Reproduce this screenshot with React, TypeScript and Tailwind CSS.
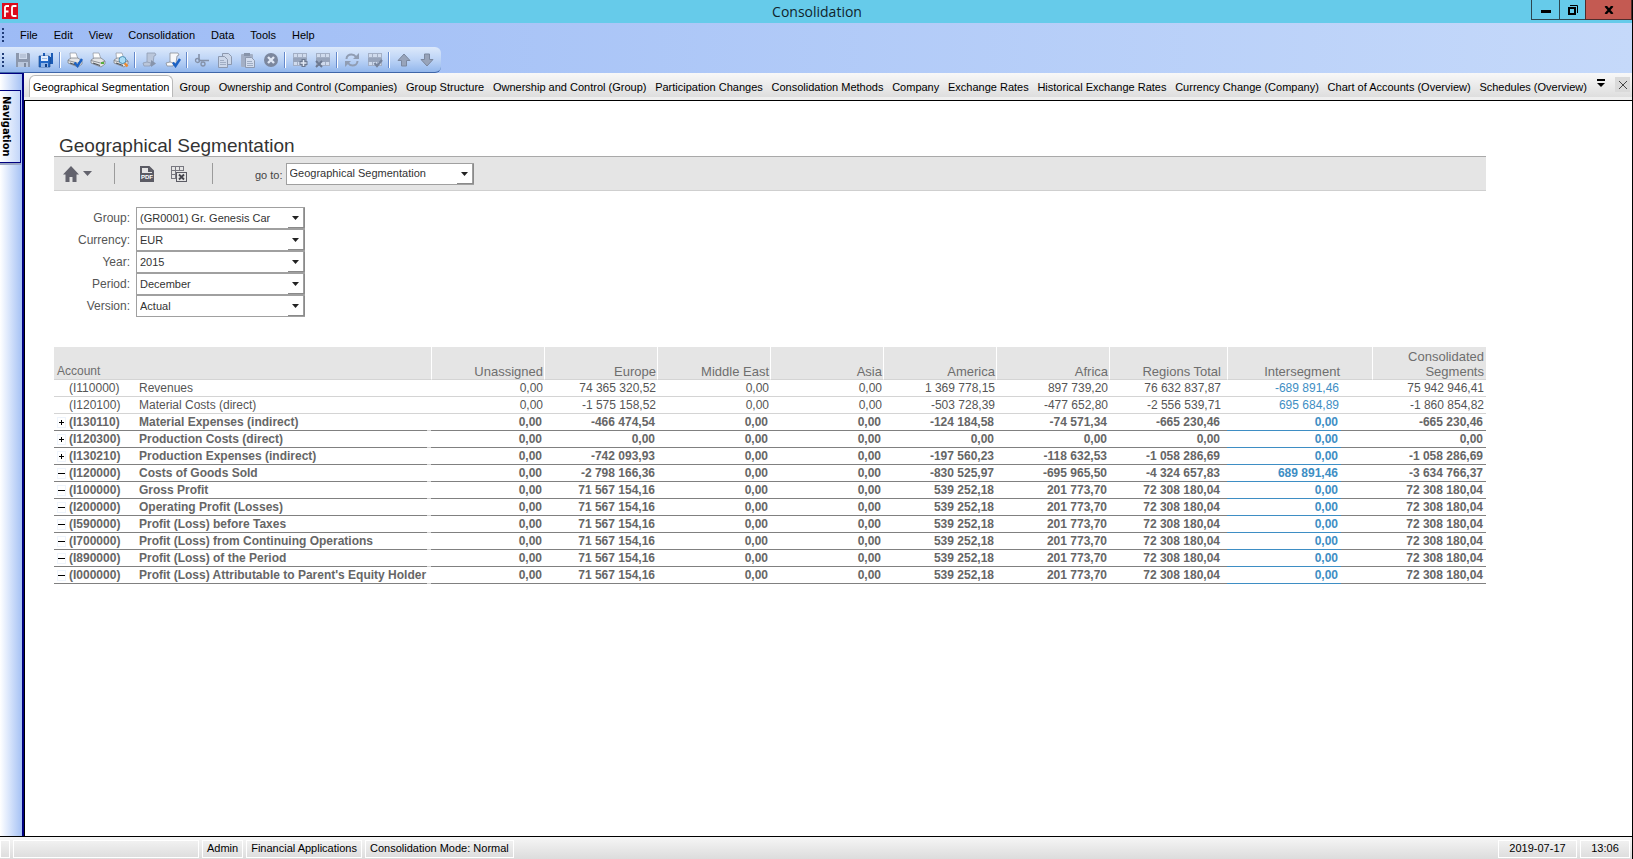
import type { ReactNode } from "react";

/* ---------- toolbar icons, 16 x 16 ---------- */

function Icon({ children }: { children: ReactNode }) {
  return (
    <svg viewBox="0 0 16 16" className="size-4" aria-hidden="true">
      {children}
    </svg>
  );
}

const SaveIcon = () => (
  <Icon>
    <path d="M1 1h13l1 1v13H1z" fill="#8c98ad" />
    <rect x="4" y="1" width="8" height="6" fill="#cfdaec" />
    <path d="M5 3h6M5 5h6" stroke="#a3b0c6" />
    <rect x="3" y="10" width="10" height="5" fill="#b9c6db" />
    <rect x="9" y="11" width="2" height="4" fill="#7d899e" />
  </Icon>
);

const SaveAllIcon = () => (
  <Icon>
    <path d="M5 1h10v11H5z" fill="#1b5bb5" />
    <rect x="7" y="1" width="6" height="4" fill="#bcd3f2" />
    <path d="M1 4h10l1 1v10H1z" fill="#2268c6" stroke="#123f85" strokeWidth="0.6" />
    <rect x="3" y="4" width="7" height="5" fill="#e3eefc" />
    <path d="M4 6.5h5" stroke="#9db9e0" />
    <rect x="3" y="11" width="7" height="4" fill="#8fb4e6" />
    <rect x="7" y="12" width="2" height="3" fill="#123f85" />
  </Icon>
);

function PrinterShape() {
  return (
    <>
      <path d="M3.500 7 3 1h6l2 6z" fill="#fdfdfd" stroke="#8e949d" strokeWidth="0.700" />
      <path d="M1 8l3-2h7l4 3v3l-4 3-10-4z" fill="#e4e5e6" stroke="#7e838b" strokeWidth="0.800" />
      <path d="M1 8.500l9.500 2.500L15 9" stroke="#777c84" strokeWidth="0.800" fill="none" />
      <path d="M3 11l7 2.500" stroke="#4e5359" strokeWidth="1.200" />
    </>
  );
}

const PrintCheckIcon = () => (
  <Icon>
    <PrinterShape />
    <path d="M7.500 10.500l3 3.500 4.500-7" stroke="#1c62c4" strokeWidth="2.400" fill="none" />
  </Icon>
);

const PrintIcon = () => (
  <Icon>
    <PrinterShape />
    <rect x="11" y="10" width="3" height="2" fill="#57ad3b" />
  </Icon>
);

const PreviewIcon = () => (
  <Icon>
    <PrinterShape />
    <path d="M11.500 11l3 3.500" stroke="#ee8a2c" strokeWidth="2.400" />
    <circle cx="9.500" cy="8" r="3.500" fill="#a9dcf5" stroke="#4e8fb5" />
  </Icon>
);

const ScriptRunIcon = () => (
  <Icon>
    <path d="M5 1h8l1 2-2 1-1 7-3 3H2l-1-3 4-1z" fill="#bac6da" stroke="#8f9cb2" strokeWidth="0.800" />
    <path d="M5 10l4 1-1 3" stroke="#8f9cb2" strokeWidth="0.800" fill="none" />
    <path d="M9 8l5 3.500L9 15z" fill="#8794ab" />
  </Icon>
);

const ScriptCheckIcon = () => (
  <Icon>
    <path d="M5 1h8l1 2-2 1-1 7-3 3H2l-1-3 4-1z" fill="#f7f8fa" stroke="#8a8f98" strokeWidth="0.800" />
    <path d="M5 10l4 1-1 3" stroke="#8a8f98" strokeWidth="0.800" fill="none" />
    <path d="M8 10.500l2.500 3.500L15 7" stroke="#1c62c4" strokeWidth="2.400" fill="none" />
  </Icon>
);

const CutIcon = () => (
  <Icon>
    <path d="M5 2v6l3 1M15 8.500H5" stroke="#8491a8" strokeWidth="1.600" fill="none" />
    <circle cx="3.500" cy="8.500" r="2" stroke="#8491a8" strokeWidth="1.300" fill="none" />
    <circle cx="9" cy="12" r="2" stroke="#8491a8" strokeWidth="1.300" fill="none" />
  </Icon>
);

const CopyIcon = () => (
  <Icon>
    <path d="M5.500 1.500h6l3 3v8h-9z" fill="#ccd7e9" stroke="#8d99af" />
    <path d="M1.500 4.500h6l3 3v8h-9z" fill="#ccd7e9" stroke="#8d99af" />
    <path d="M3 8.500h4M3 10.500h6M3 12.500h6" stroke="#a0adc3" />
  </Icon>
);

const PasteIcon = () => (
  <Icon>
    <rect x="1" y="2" width="12" height="13" rx="1" fill="#a3afc5" />
    <rect x="4" y="1" width="6" height="3" fill="#8794aa" />
    <path d="M5.500 5.500h6l3 3v7h-9z" fill="#d3ddee" stroke="#8d99af" />
    <path d="M7 9.500h5M7 11.500h6M7 13.500h6" stroke="#a0adc3" />
  </Icon>
);

const CancelIcon = () => (
  <Icon>
    <circle cx="8" cy="8" r="7" fill="#7b879e" />
    <path d="M5 5l6 6M11 5l-6 6" stroke="#e0e8f5" strokeWidth="2.400" />
  </Icon>
);

function GridShape() {
  return (
    <>
      <rect x="1" y="1" width="14" height="13" fill="#d0dbed" />
      <path d="M1.500 1v13M5.500 1v13M10.500 1v13M14.500 1v13M1 1.500h14M1 5.500h14M1 13.500h14" stroke="#a3afc5" fill="none" />
      <rect x="1" y="6" width="14" height="4" fill="#97a4bb" />
    </>
  );
}

const RowAddIcon = () => (
  <Icon>
    <GridShape />
    <path d="M11.500 7v8M7.500 11h8" stroke="#6b7890" strokeWidth="4" />
    <path d="M11.500 8v6M8.500 11h6" stroke="#e3eaf6" strokeWidth="1.500" />
  </Icon>
);

const RowDeleteIcon = () => (
  <Icon>
    <GridShape />
    <path d="M1 9l6 6M7 9l-6 6" stroke="#6b7890" strokeWidth="2" />
  </Icon>
);

const RefreshIcon = () => (
  <Icon>
    <path d="M2.500 7c0-3 2.500-4.500 5-4.500 2 0 3.500 1 4.500 2.500" stroke="#909db3" strokeWidth="2" fill="none" />
    <path d="M15 1v6H9z" fill="#909db3" />
    <path d="M13.500 9c0 3-2.500 4.500-5 4.500-2 0-3.500-1-4.500-2.500" stroke="#909db3" strokeWidth="2" fill="none" />
    <path d="M1 15V9h6z" fill="#909db3" />
  </Icon>
);

const GridCheckIcon = () => (
  <Icon>
    <GridShape />
    <path d="M7.500 11l2.500 3 5-6" stroke="#76839b" strokeWidth="2.200" fill="none" />
  </Icon>
);

const UpIcon = () => (
  <Icon>
    <path d="M8 2l6 6.500h-3.500V14h-5V8.500H2z" fill="#98a4ba" stroke="#7b889f" />
  </Icon>
);

const DownIcon = () => (
  <Icon>
    <path d="M8 14l6-6.500h-3.500V2h-5v5.500H2z" fill="#98a4ba" stroke="#7b889f" />
  </Icon>
);

const toolGroups: { label: string; Glyph: () => ReactNode }[][] = [
  [
    { label: "Save", Glyph: SaveIcon },
    { label: "Save all", Glyph: SaveAllIcon },
  ],
  [
    { label: "Print with options", Glyph: PrintCheckIcon },
    { label: "Print", Glyph: PrintIcon },
    { label: "Print preview", Glyph: PreviewIcon },
  ],
  [
    { label: "Run script", Glyph: ScriptRunIcon },
    { label: "Check script", Glyph: ScriptCheckIcon },
  ],
  [
    { label: "Cut", Glyph: CutIcon },
    { label: "Copy", Glyph: CopyIcon },
    { label: "Paste", Glyph: PasteIcon },
    { label: "Cancel", Glyph: CancelIcon },
  ],
  [
    { label: "Add row", Glyph: RowAddIcon },
    { label: "Delete row", Glyph: RowDeleteIcon },
  ],
  [
    { label: "Refresh", Glyph: RefreshIcon },
    { label: "Validate", Glyph: GridCheckIcon },
  ],
  [
    { label: "Move up", Glyph: UpIcon },
    { label: "Move down", Glyph: DownIcon },
  ],
];

/* ---------- window chrome ---------- */

function TitleBar() {
  return (
    <header className="flex h-[23px] items-start bg-[#66cbea]">
      <div className="flex-1 pt-[3px] pl-[2px]">
        <svg viewBox="0 0 16 16" className="size-4" aria-label="FC">
          <rect width="16" height="16" fill="#dc0a1c" />
          <path d="M3 14V4.500Q3 3 4.500 3H7M3 8.500h3.500" stroke="#fff" strokeWidth="1.800" fill="none" />
          <path d="M14.500 3h-3Q10 3 10 4.500v7q0 1.500 1.500 1.500h3" stroke="#fff" strokeWidth="1.800" fill="none" />
        </svg>
      </div>
      <h1 className="font-['Open_Sans',sans-serif] text-sm leading-[23px] text-[#10242c]">Consolidation</h1>
      <div className="flex flex-1 justify-end">
        <button aria-label="Minimize" className="flex h-5 w-[29px] items-center justify-center border border-t-0 border-[#2c4650]">
          <span className="mt-1 h-[3px] w-[10px] bg-black" />
        </button>
        <button aria-label="Restore" className="flex h-5 w-[25px] items-center justify-center border-b border-[#2c4650]">
          <svg viewBox="0 0 10 10" className="size-[10px]" aria-hidden="true">
            <path d="M2 .5h7.500V8" stroke="#000" fill="none" />
            <rect x="1" y="3" width="6" height="6" stroke="#000" strokeWidth="2" fill="none" />
          </svg>
        </button>
        <button aria-label="Close" className="flex h-5 w-[47px] items-center justify-center border border-t-0 border-[#4f2c2c] bg-[#c45a52]">
          <svg viewBox="0 0 10 8" className="h-2 w-[10px]" aria-hidden="true">
            <path d="M1.500 0l7 8M8.500 0l-7 8" stroke="#000" strokeWidth="2.400" />
          </svg>
        </button>
      </div>
    </header>
  );
}

const Grip = () => <span className="ml-[2px] w-[2px] self-center border-l-2 border-dotted border-[#1f3c78] py-[7px]" />;

function MenuBar() {
  return (
    <nav className="flex h-6 text-black">
      <Grip />
      <div className="flex items-center gap-4 pl-4">
        {["File", "Edit", "View", "Consolidation", "Data", "Tools", "Help"].map((m) => (
          <button key={m} className="leading-6">
            {m}
          </button>
        ))}
      </div>
    </nav>
  );
}

function ToolBar() {
  return (
    <div className="flex h-[26px] w-fit rounded-r-md border-b border-[#3f66a8] bg-linear-to-b from-[#dce9fb] via-[#bdd4f6] to-[#93b7ec] pr-[3px]">
      <Grip />
      <div className="flex items-center pl-[7px]">
        {toolGroups.map((group, i) => (
          <div key={i} className="flex items-center">
            {i > 0 && <span className="mx-[2px] h-4 w-[2px] border-r border-l border-r-white border-l-[#6489cc]" />}
            {group.map(({ label, Glyph }) => (
              <button key={label} aria-label={label} className="flex h-6 w-[23px] items-center justify-center">
                <Glyph />
              </button>
            ))}
          </div>
        ))}
      </div>
    </div>
  );
}

const tabs = [
  "Group",
  "Ownership and Control (Companies)",
  "Group Structure",
  "Ownership and Control (Group)",
  "Participation Changes",
  "Consolidation Methods",
  "Company",
  "Exchange Rates",
  "Historical Exchange Rates",
  "Currency Change (Company)",
  "Chart of Accounts (Overview)",
  "Schedules (Overview)",
];

function TabStrip() {
  return (
    <div className="flex h-6 bg-linear-to-b from-[#f8f8f8] to-[#dedede] text-black">
      <button className="mt-[2px] ml-[5px] rounded-t-md border border-b-0 border-[#b9b9b9] bg-white px-[3px] pt-[2px] whitespace-nowrap">
        Geographical Segmentation
      </button>
      <div className="flex flex-1 justify-between pt-1 pl-[6px]">
        {tabs.map((t) => (
          <button key={t} className="whitespace-nowrap">
            {t}
          </button>
        ))}
      </div>
      <button aria-label="More tabs" className="ml-[6px] flex w-4 items-center justify-center">
        <svg viewBox="0 0 8 8" className="mb-1 size-2" aria-hidden="true">
          <path d="M0 0h8v2H0zM0 4h8L4 8z" />
        </svg>
      </button>
      <button aria-label="Close tab" className="mt-1 mr-[2px] ml-[6px] flex size-[15px] items-center justify-center bg-[#dadada]">
        <svg viewBox="0 0 8 8" className="size-2" aria-hidden="true">
          <path d="M0 0l8 8M8 0L0 8" stroke="#444" />
        </svg>
      </button>
    </div>
  );
}

function NavigationRail() {
  return (
    <aside className="w-6 shrink-0 border-t border-r-2 border-[#000080] bg-linear-to-r from-white to-[#a5c1f4] pt-4">
      <button className="flex h-[73px] w-[21px] items-center border border-l-0 border-[#000080] bg-linear-to-r from-white to-[#c3d6f9] font-['DejaVu_Sans_Condensed','DejaVu_Sans',sans-serif] text-[11px] font-bold text-black shadow-[0_2px_0_#9aa6c4]">
        <span className="w-3 leading-3 [writing-mode:vertical-rl]">Navigation</span>
      </button>
    </aside>
  );
}

/* ---------- report ---------- */

function PickList({ id, value, width }: { id: string; value: string; width: string }) {
  return (
    <div className={`relative h-[22px] ${width}`}>
      <select
        id={id}
        defaultValue={value}
        className="h-full w-full appearance-none border border-r-2 border-[#a0a0a0] bg-white pl-[3px] text-[11px] text-[#333]"
      >
        <option>{value}</option>
      </select>
      <svg viewBox="0 0 17 20" className="pointer-events-none absolute top-px right-0 h-5 w-[17px]" aria-hidden="true">
        <path d="M0 19.500h16.500V0" stroke="#8a8a8a" fill="none" />
        <path d="M4 8h7L7.500 12z" fill="#222" />
      </svg>
    </div>
  );
}

function ReportBar() {
  return (
    <div className="flex h-[35px] items-center border-t border-b border-t-[#a9a9a9] border-b-[#cfcfcf] bg-[#e5e5e5] text-[#444]">
      <button aria-label="Home" className="ml-[9px] flex items-center gap-1">
        <svg viewBox="0 0 16 16" className="size-4" fill="#63636d" aria-hidden="true">
          <path d="M8 0l8 8.500h-2.500V16h-4v-5h-3v5h-4V8.500H0z" />
        </svg>
        <svg viewBox="0 0 9 5" className="h-[5px] w-[9px]" fill="#63636d" aria-hidden="true">
          <path d="M0 0h9L4.500 5z" />
        </svg>
      </button>
      <span className="ml-[22px] h-[21px] w-px bg-[#9b9b9b]" />
      <button aria-label="Export to PDF" className="ml-[25px]">
        <svg viewBox="0 0 14 16" className="h-4 w-[14px]" aria-hidden="true">
          <path d="M1 15V1h8l4 4v10z" fill="#e5e5e5" stroke="#5b5b64" strokeWidth="2" />
          <path d="M8 1v5h5z" fill="#5b5b64" />
          <rect y="7" width="14" height="7" fill="#5b5b64" />
          <text x="7" y="13" textAnchor="middle" fontSize="6" fontWeight="bold" fill="#fff" fontFamily="Liberation Sans">
            PDF
          </text>
        </svg>
      </button>
      <button aria-label="Export to Excel" className="ml-[17px]">
        <svg viewBox="0 0 16 16" className="size-4" aria-hidden="true">
          <path d="M.5 0v13M4.500 0v13M8.500 0v5M12.500 0v5M0 .5h13M0 4.500h13M0 8.500h5M0 12.500h5" stroke="#77777f" fill="none" />
          <rect x="5.500" y="6.500" width="10" height="9" fill="#e5e5e5" stroke="#5b5b64" />
          <path d="M8 8.500l5 5M13 8.500l-5 5" stroke="#44444c" strokeWidth="1.800" />
        </svg>
      </button>
      <span className="ml-[25px] h-[21px] w-px bg-[#9b9b9b]" />
      <label htmlFor="goto" className="mr-[3px] ml-[42px] pt-1 text-[11px]">
        go to:
      </label>
      <PickList id="goto" value="Geographical Segmentation" width="w-[188px]" />
    </div>
  );
}

const filters = [
  ["Group", "(GR0001) Gr. Genesis Car"],
  ["Currency", "EUR"],
  ["Year", "2015"],
  ["Period", "December"],
  ["Version", "Actual"],
];

const regions = ["Unassigned", "Europe", "Middle East", "Asia", "America", "Africa"];

type Mark = "" | "+" | "-";
const zero = "0,00";
const profit = [zero, "71 567 154,16", zero, zero, "539 252,18", "201 773,70", "72 308 180,04", zero, "72 308 180,04"];

const rows: [Mark, string, string, string[]][] = [
  ["", "I110000", "Revenues", [zero, "74 365 320,52", zero, zero, "1 369 778,15", "897 739,20", "76 632 837,87", "-689 891,46", "75 942 946,41"]],
  ["", "I120100", "Material Costs (direct)", [zero, "-1 575 158,52", zero, zero, "-503 728,39", "-477 652,80", "-2 556 539,71", "695 684,89", "-1 860 854,82"]],
  ["+", "I130110", "Material Expenses (indirect)", [zero, "-466 474,54", zero, zero, "-124 184,58", "-74 571,34", "-665 230,46", zero, "-665 230,46"]],
  ["+", "I120300", "Production Costs (direct)", [zero, zero, zero, zero, zero, zero, zero, zero, zero]],
  ["+", "I130210", "Production Expenses (indirect)", [zero, "-742 093,93", zero, zero, "-197 560,23", "-118 632,53", "-1 058 286,69", zero, "-1 058 286,69"]],
  ["-", "I120000", "Costs of Goods Sold", [zero, "-2 798 166,36", zero, zero, "-830 525,97", "-695 965,50", "-4 324 657,83", "689 891,46", "-3 634 766,37"]],
  ["-", "I100000", "Gross Profit", profit],
  ["-", "I200000", "Operating Profit (Losses)", profit],
  ["-", "I590000", "Profit (Loss) before Taxes", profit],
  ["-", "I700000", "Profit (Loss) from Continuing Operations", profit],
  ["-", "I890000", "Profit (Loss) of the Period", profit],
  ["-", "I000000", "Profit (Loss) Attributable to Parent's Equity Holder", profit],
];

function ToggleButton({ mark }: { mark: Mark }) {
  if (mark === "") return null;
  return (
    <button aria-label={mark === "+" ? "Expand" : "Collapse"} className="flex h-[11px] w-[9px] items-center justify-center border border-[#eef4fc]">
      <svg viewBox="0 0 7 7" className="size-[7px] shrink-0" stroke="#000" aria-hidden="true">
        {mark === "+" ? <path d="M1 3.500h5M3.500 1v5" /> : <path d="M0 3.500h7" />}
      </svg>
    </button>
  );
}

function SegmentTable() {
  const head = "border-b border-l border-white border-b-[#d4d4d4] bg-[#e5e5e5] pt-px text-right align-bottom font-normal";
  return (
    <table className="w-full table-fixed border-separate border-spacing-0 text-[12px] leading-4 whitespace-nowrap">
      <colgroup>
        <col />
        <col className="w-1" />
        <col className="w-[113px]" span={6} />
        <col className="w-[118px]" />
        <col className="w-[114px]" />
        <col className="w-[31px]" />
        <col className="w-[114px]" />
      </colgroup>
      <thead className="text-[13px] leading-[15px] text-[#6e6e6e]">
        <tr className="h-[33px]">
          <th colSpan={2} className="border-b border-[#d4d4d4] bg-[#e5e5e5] pl-[3px] text-left align-bottom text-[12px] font-normal">
            Account
          </th>
          {regions.map((r) => (
            <th key={r} className={`${head} pr-px`}>
              {r}
            </th>
          ))}
          <th className={`${head} pr-[6px]`}>Regions Total</th>
          <th colSpan={2} className={`${head} pr-[32px]`}>
            Intersegment
          </th>
          <th className={`${head} pr-[2px]`}>
            Consolidated
            <br />
            Segments
          </th>
        </tr>
      </thead>
      <tbody>
        {rows.map(([mark, code, name, values]) => {
          const bold = mark !== "";
          const line = bold ? "border-b border-[#808080]" : "border-b border-[#d4d4d4]";
          const blueLine = bold ? "border-b border-[#3e8ec4]" : "border-b border-[#d4d4d4]";
          const pad = bold ? "pr-[2px]" : "pr-px";
          return (
            <tr key={code} className={bold ? "font-bold text-[#666]" : "text-[#555]"}>
              <th scope="row" className={`${line} p-0 text-left ${bold ? "font-bold" : "font-normal"}`}>
                <span className="flex items-center">
                  <span className="w-[15px] shrink-0 pl-[3px]">
                    <ToggleButton mark={mark} />
                  </span>
                  <span className="w-[70px] shrink-0">({code})</span>
                  <span>{name}</span>
                </span>
              </th>
              <td className="border-b border-[#d4d4d4]" />
              {values.slice(0, 6).map((v, i) => (
                <td key={i} className={`${line} ${pad} text-right`}>
                  {v}
                </td>
              ))}
              <td className={`${line} ${bold ? "pr-[7px]" : "pr-[6px]"} text-right`}>{values[6]}</td>
              <td className={`${blueLine} ${bold ? "pr-[3px]" : "pr-[2px]"} text-right text-[#3e8ec4]`}>{values[7]}</td>
              <td className={line} />
              <td className={`${line} ${bold ? "pr-[3px]" : "pr-[2px]"} text-right`}>{values[8]}</td>
            </tr>
          );
        })}
      </tbody>
    </table>
  );
}

function Report() {
  return (
    <main className="flex-1 overflow-auto border-t border-l border-black bg-white pt-[35px] pr-[146px] pl-[29px]">
      <h2 className="pl-[5px] text-[19px] leading-5 text-[#333]">Geographical Segmentation</h2>
      <ReportBar />
      <form className="mt-4 mb-[30px]">
        {filters.map(([label, value]) => (
          <div key={label} className="flex items-center">
            <label htmlFor={label} className="w-[76px] text-right text-[12px] text-[#555]">
              {label}:
            </label>
            <div className="pl-[6px]">
              <PickList id={label} value={value} width="w-[169px]" />
            </div>
          </div>
        ))}
      </form>
      <SegmentTable />
    </main>
  );
}

function StatusBar() {
  const cell = "flex h-[18px] items-center border border-white bg-linear-to-b from-[#f1f1f1] to-[#dedede] px-1 whitespace-nowrap";
  return (
    <footer className="flex h-[23px] items-center justify-between border-t border-black bg-linear-to-b from-[#f6f6f6] to-[#dcdcdc] pt-px text-black">
      <div className="flex gap-[3px]">
        <span className={`${cell} w-[6px]`} />
        <span className={`${cell} w-[186px]`} />
        <span className={cell}>Admin</span>
        <span className={cell}>Financial Applications</span>
        <span className={cell}>Consolidation Mode: Normal</span>
      </div>
      <div className="flex gap-[3px] pr-[2px]">
        <span className={`${cell} w-[79px] justify-center`}>2019-07-17</span>
        <span className={`${cell} w-[50px] justify-center`}>13:06</span>
      </div>
    </footer>
  );
}

export default function App() {
  return (
    <div className="flex h-screen flex-col border-r border-black bg-white font-['Liberation_Sans',Arial,sans-serif] text-[11px]">
      <TitleBar />
      <div className="bg-linear-to-r from-[#9dbbf5] to-[#c5d9fa]">
        <MenuBar />
        <ToolBar />
      </div>
      <div className="flex min-h-0 flex-1">
        <NavigationRail />
        <div className="flex min-w-0 flex-1 flex-col">
          <TabStrip />
          <div className="h-[3px] bg-[#efefef]" />
          <Report />
        </div>
      </div>
      <StatusBar />
    </div>
  );
}
